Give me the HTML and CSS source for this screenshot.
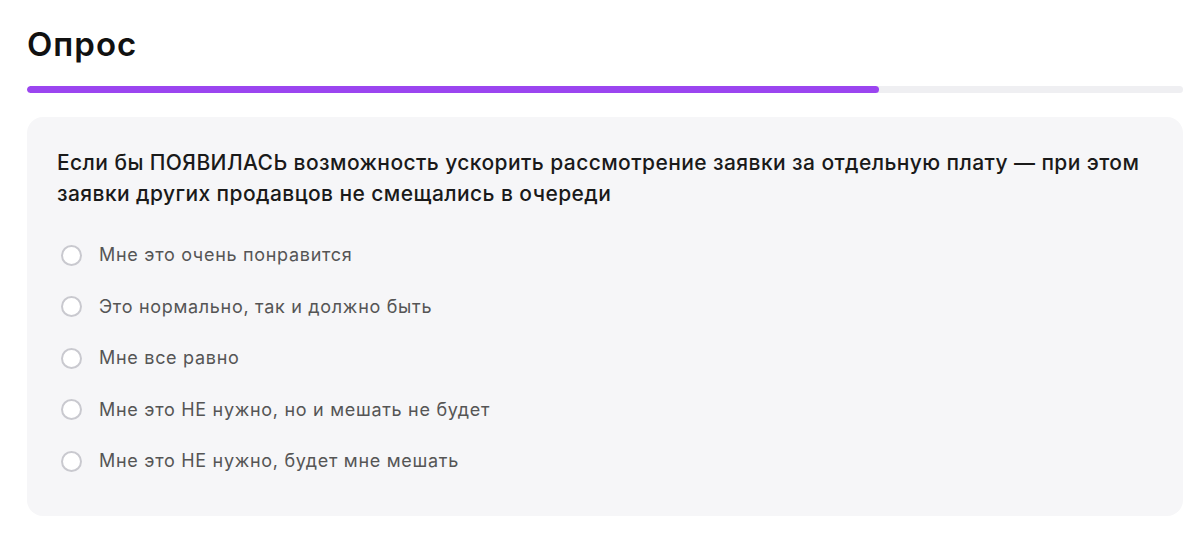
FILE: index.html
```html
<!DOCTYPE html>
<html lang="ru">
<head>
<meta charset="utf-8">
<title>Опрос</title>
<link rel="stylesheet" href="styles.css">
</head>
<body>
<main class="page">
  <h1 class="title">Опрос</h1>
  <div class="progress"><div class="progress-fill" style="width:73.7%"></div></div>
  <section class="card">
    <p class="question">Если бы ПОЯВИЛАСЬ возможность ускорить рассмотрение заявки за отдельную плату — при этом заявки других продавцов не смещались в очереди</p>
    <ul class="options">
      <li class="option"><span class="radio"></span><span class="label">Мне это очень понравится</span></li>
      <li class="option"><span class="radio"></span><span class="label">Это нормально, так и должно быть</span></li>
      <li class="option"><span class="radio"></span><span class="label">Мне все равно</span></li>
      <li class="option"><span class="radio"></span><span class="label">Мне это НЕ нужно, но и мешать не будет</span></li>
      <li class="option"><span class="radio"></span><span class="label">Мне это НЕ нужно, будет мне мешать</span></li>
    </ul>
  </section>
</main>
</body>
</html>
```

FILE: styles.css
```css
* { box-sizing: border-box; }
html, body { margin: 0; padding: 0; background: #fff; }
body { font-family: Inter, "Noto Sans", sans-serif; color: #1a1a1a; }
.page { padding: 23px 17px 0 27px; }
.title { margin: 0; font-size: 33px; font-weight: 600; line-height: 42px; letter-spacing: 1px; color: #111; }
.progress { margin-top: 21px; height: 7px; border-radius: 4px; background: #efeff2; overflow: hidden; }
.progress-fill { height: 100%; background: #9b45f0; border-radius: 4px; }
.card { margin-top: 24px; background: #f6f6f8; border-radius: 16px; padding: 30px 30px 40px 30px; height: 399px; }
.question { margin: 0; font-size: 21px; font-weight: 500; line-height: 31px; color: #1a1a1a; letter-spacing: 0.42px; }
.options { list-style: none; margin: 35px 0 0 0; padding: 0 0 0 4px; display: flex; flex-direction: column; gap: 29.5px; }
.option { display: flex; align-items: center; gap: 17px; height: 22px; }
.radio { width: 21px; height: 21px; border-radius: 50%; border: 2px solid #c9c9cf; background: #fff; flex: none; }
.label { font-size: 18px; line-height: 22px; color: #555; font-weight: 400; letter-spacing: 0.7px; }
```
